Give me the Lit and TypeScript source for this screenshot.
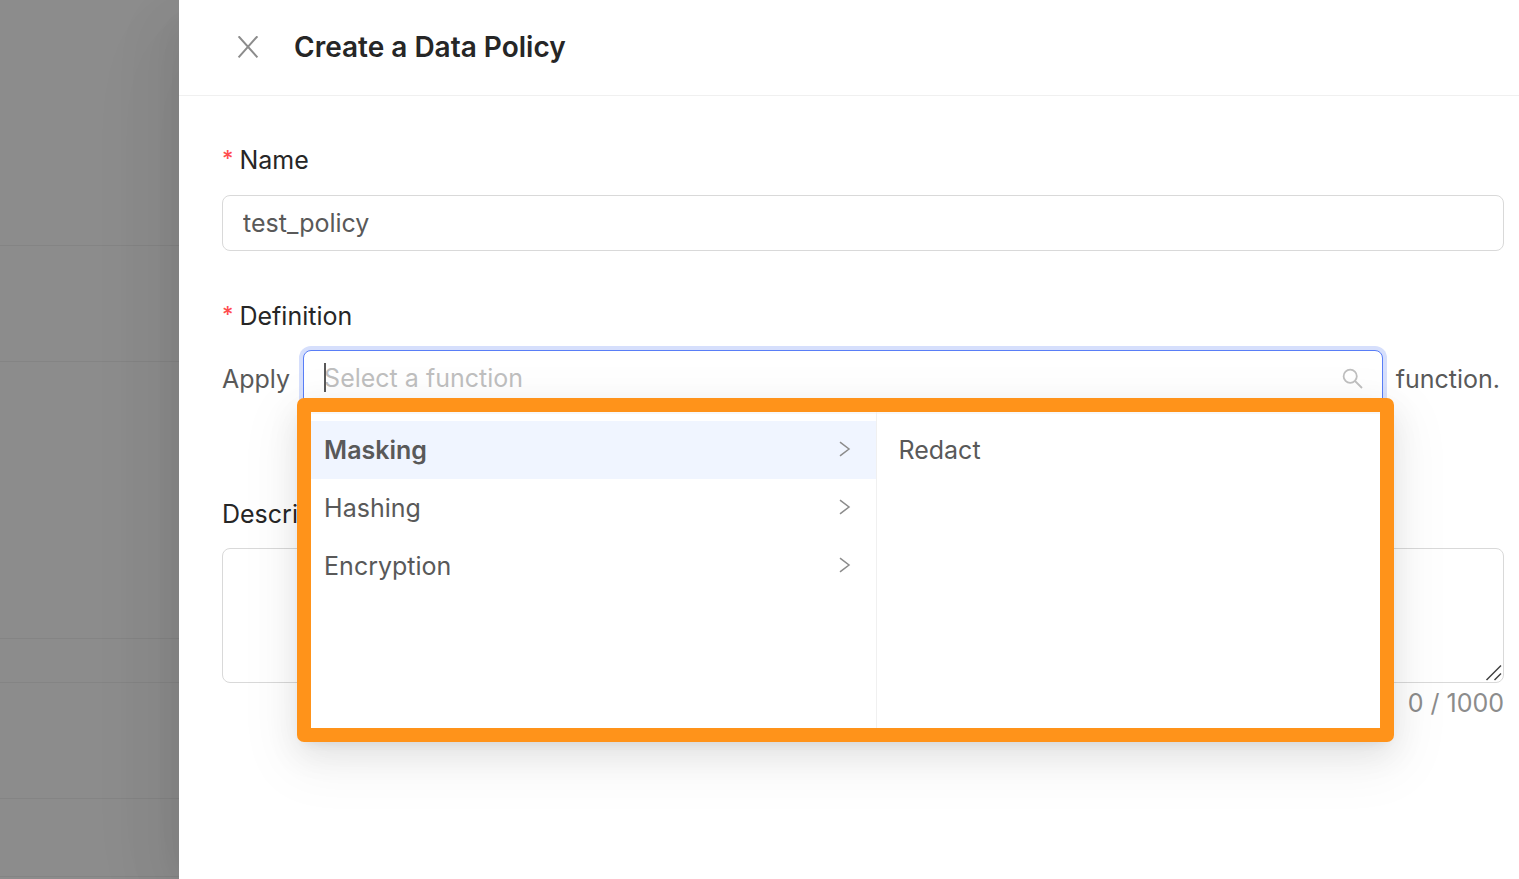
import { LitElement, html, css, svg } from "lit";
import { customElement, state } from "lit/decorators.js";

const chevron = svg`<path d="M1 1.2 L10 8 L1 14.8" />`;

@customElement("app-root")
export class AppRoot extends LitElement {
  @state() private active = "Masking";

  private groups = ["Masking", "Hashing", "Encryption"];

  static styles = css`
    :host {
      display: flex;
      min-height: 100vh;
      overflow: hidden;
      background: #8c8c8c;
      font-family: Inter, "Liberation Sans", sans-serif;
      font-size: 25px;
      line-height: 36px;
      color: #595959;
    }
    * {
      box-sizing: border-box;
    }
    button,
    input,
    textarea {
      font: inherit;
      color: inherit;
      margin: 0;
    }
    .backdrop {
      flex: 0 0 179px;
      display: grid;
      grid-template-rows: 246px 116px 277px 44px 116px 78px;
      align-content: start;
    }
    .line {
      border-bottom: 1px solid #848484;
    }
    .drawer {
      flex: 1;
      min-width: 0;
      background: #fff;
      box-shadow:
        -12px 12px 32px -16px rgba(0, 0, 0, 0.06),
        -16px 18px 56px rgba(0, 0, 0, 0.05),
        -18px 32px 96px rgba(0, 0, 0, 0.03);
    }
    .head {
      display: flex;
      align-items: center;
      gap: 35px;
      height: 96px;
      padding: 0 58px 2px;
      border-bottom: 1px solid #f0f0f0;
    }
    .close {
      display: flex;
      padding: 0;
      border: 0;
      background: none;
      color: #8c8c8c;
    }
    svg {
      display: block;
      fill: none;
      stroke: currentColor;
    }
    h1 {
      margin: 0;
      font-size: 28px;
      font-weight: 600;
      color: #262626;
    }
    form {
      padding: 46px 15px 40px 43px;
    }
    .label {
      display: flex;
      gap: 6px;
      height: 36px;
      color: #262626;
    }
    .req {
      color: #ff4d4f;
      font-size: 22px;
      font-weight: 500;
      line-height: 32px;
    }
    .box {
      display: block;
      width: 100%;
      height: 56px;
      border: 1px solid #d9d9d9;
      border-radius: 8px;
      padding: 0 20px;
      background: #fff;
      outline: none;
    }
    .name {
      margin: 17px 0 47px;
    }
    .row {
      display: flex;
      align-items: center;
      gap: 13px;
      margin: 16px 0 90px;
      padding-right: 4px;
    }
    .word {
      padding-top: 2px;
    }
    .select {
      position: relative;
      flex: 1;
    }
    .select .box {
      border-color: #597ef7;
      box-shadow: 0 0 0 4px #d6dffc;
    }
    .box::placeholder {
      color: #bfbfbf;
      opacity: 1;
    }
    .caret {
      position: absolute;
      left: 21px;
      top: 13px;
      width: 2px;
      height: 29px;
      background: #595959;
    }
    .search {
      position: absolute;
      right: 20px;
      top: 18px;
      color: #bfbfbf;
    }
    .popup {
      position: absolute;
      z-index: 2;
      top: 48px;
      left: -6px;
      right: -11px;
      display: flex;
      height: 344px;
      border: 14px solid #ff931a;
      border-radius: 7px;
      background: #fff;
      box-shadow:
        inset 0 2px #f8f8f8,
        0 6px 12px -8px rgba(0, 0, 0, 0.12),
        0 12px 32px rgba(0, 0, 0, 0.08),
        0 18px 56px 10px rgba(0, 0, 0, 0.05);
    }
    .menu {
      margin: 0;
      padding: 9px 0 0;
      list-style: none;
    }
    .groups {
      flex: 0 0 53%;
      border-right: 1px solid #f0f0f0;
    }
    .item {
      display: flex;
      align-items: center;
      justify-content: space-between;
      width: 100%;
      height: 58px;
      padding: 0 25px 0 13px;
      border: 0;
      background: none;
      text-align: left;
    }
    .item svg {
      margin-bottom: 2px;
      color: #8c8c8c;
    }
    .item.on {
      background: #f0f5ff;
      font-weight: 600;
    }
    .leaf {
      padding-left: 21px;
    }
    .area {
      height: 135px;
      margin-top: 16px;
      padding: 10px 20px;
      resize: none;
    }
    .wrap {
      position: relative;
    }
    .grip {
      position: absolute;
      right: 1px;
      bottom: 1px;
      color: #404040;
    }
    .count {
      margin-top: 2px;
      text-align: right;
      color: #8c8c8c;
    }
  `;

  render() {
    return html`
      <div class="backdrop">
        ${[0, 1, 2, 3, 4, 5].map(() => html`<div class="line"></div>`)}
      </div>
      <main class="drawer">
        <header class="head">
          <button class="close" aria-label="Close">
            <svg width="22" height="22" viewBox="0 0 22 22" stroke-width="2">
              <path d="M1.6 0.3 L20.4 21.3 M20.4 0.3 L1.6 21.3" />
            </svg>
          </button>
          <h1>Create a Data Policy</h1>
        </header>
        <form @submit=${(e: Event) => e.preventDefault()}>
          <label class="label" for="name"><span class="req">*</span>Name</label>
          <input class="box name" id="name" value="test_policy" />
          <label class="label" for="fn"><span class="req">*</span>Definition</label>
          <div class="row">
            <span class="word">Apply</span>
            <div class="select">
              <input class="box" id="fn" role="combobox" aria-expanded="true"
                aria-controls="functions" placeholder="Select a function" />
              <span class="caret"></span>
              <svg class="search" width="21" height="21" viewBox="0 0 21 21" stroke-width="1.8">
                <circle cx="8.2" cy="8.2" r="6.6" />
                <path d="M13 13 L20 20" />
              </svg>
              <div class="popup" id="functions">
                <ul class="menu groups">
                  ${this.groups.map(
                    (g) => html`<li>
                      <button type="button" class="item ${g === this.active ? "on" : ""}"
                        @click=${() => (this.active = g)}>
                        ${g}
                        <svg width="12" height="16" viewBox="0 0 12 16" stroke-width="1.5">${chevron}</svg>
                      </button>
                    </li>`
                  )}
                </ul>
                <ul class="menu">
                  <li><button type="button" class="item leaf">Redact</button></li>
                </ul>
              </div>
            </div>
            <span class="word">function.</span>
          </div>
          <label class="label" for="desc">Description</label>
          <div class="wrap">
            <textarea class="box area" id="desc" maxlength="1000"></textarea>
            <svg class="grip" width="18" height="18" viewBox="0 0 18 18" stroke-width="1.5">
              <path d="M1.5 16 L16 1.5 M9.5 16 L16 9.5" />
            </svg>
          </div>
          <div class="count">0 / 1000</div>
        </form>
      </main>
    `;
  }
}
